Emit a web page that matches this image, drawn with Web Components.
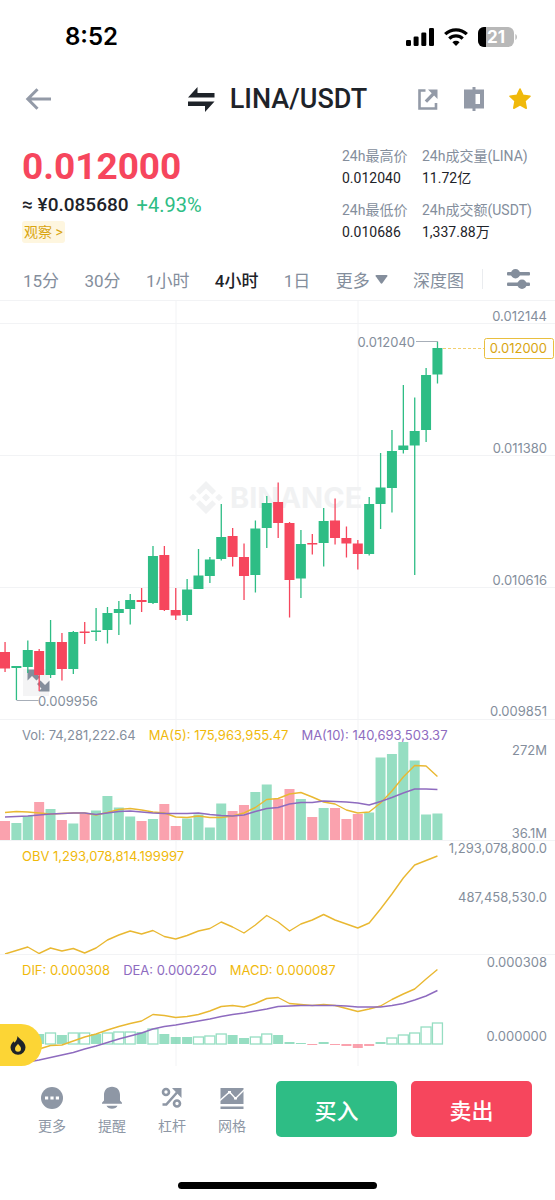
<!DOCTYPE html>
<html lang="zh-CN">
<head>
<meta charset="utf-8">
<meta name="viewport" content="width=device-width, initial-scale=1">
<title>LINA/USDT</title>
<style>
    body{
        margin: 0;
        background: #fff;
        color: #1e2329;
        font-family: Roboto, "Noto Sans CJK SC", sans-serif;
        --muted: #848e9c;
        --up: #2ebd85;
        --down: #f6465d;
        --gold: #f0b90b;
        --line: #f2f3f5;
    }
</style>
</head>
<body>
<trade-page></trade-page>

<script>
class StatusBar extends HTMLElement{

constructor(){
    super();
    this.attachShadow({ mode: 'open' });
}

connectedCallback(){
    this.shadowRoot.innerHTML = `
    <style>
    :host{
        display: flex;
        justify-content: space-between;
        align-items: center;
        padding: 22px 38px 0 65px;
        color: #000;
        font: 600 24px/30px Inter, sans-serif;
    }
    div{
        display: flex;
        align-items: center;
        gap: 10px;
    }
    svg{
        display: block;
    }
    </style>
    <span>${ this.getAttribute('time') }</span>
    <div>
        <svg width="28" height="18" viewBox="0 0 28 18">
            <rect x="0" y="12" width="5" height="6" rx="1.3"/>
            <rect x="7.6" y="8.5" width="5" height="9.5" rx="1.3"/>
            <rect x="15.3" y="4.5" width="5" height="13.5" rx="1.3"/>
            <rect x="23" y="0" width="5" height="18" rx="1.3"/>
        </svg>
        <svg width="24" height="18" viewBox="0 0 24 18" fill="none" stroke="#000" stroke-width="3.2">
            <path d="M1.2 6.2a15.5 15.5 0 0 1 21.6 0"/>
            <path d="M5.3 10.6a9.6 9.6 0 0 1 13.4 0"/>
            <path d="M12 18l-3.6-3.8a5.2 5.2 0 0 1 7.2 0z" fill="#000" stroke="none"/>
        </svg>
        <svg width="39" height="20" viewBox="0 0 39 20">
            <defs><clipPath id="cell"><rect width="36" height="20" rx="6"/></clipPath></defs>
            <g clip-path="url(#cell)">
                <rect width="36" height="20" fill="#b8b8b8"/>
                <rect width="8" height="20"/>
            </g>
            <path d="M37.4 7v6c2-1 2-5 0-6z" fill="#b8b8b8"/>
            <text x="18" y="16" text-anchor="middle" font-size="17" font-weight="700" fill="#fff">${ this.getAttribute('battery') }</text>
        </svg>
    </div>
    `;
}

}

customElements.define('status-bar', StatusBar);


class PairHeader extends HTMLElement{

constructor(){
    super();
    this.attachShadow({ mode: 'open' });
}

connectedCallback(){
    this.shadowRoot.innerHTML = `
    <style>
    :host{
        display: grid;
        grid-template-columns: 1fr auto 1fr;
        align-items: center;
        padding: 27px 22px 0;
    }
    h1{
        display: flex;
        align-items: center;
        gap: 15px;
        margin: 0;
        font-size: 27px;
        font-weight: 500;
        line-height: 40px;
    }
    button{
        display: flex;
        align-items: center;
        justify-content: center;
        width: 32px;
        height: 40px;
        padding: 0;
        border: 0;
        background: none;
        color: #939aa7;
        cursor: pointer;
    }
    nav{
        display: flex;
        justify-content: flex-end;
        gap: 14px;
        margin-right: -3px;
    }
    </style>
    <button aria-label="返回">
        <svg width="28" height="24" viewBox="0 0 28 24" fill="none" stroke="currentColor" stroke-width="3">
            <path d="M27 12H4M13.5 2.200L3.800 12l9.700 9.800"/>
        </svg>
    </button>
    <h1>
        <svg width="27" height="25" viewBox="0 0 27 25" fill="#1e2329">
            <path d="M0 10.500L9.500 0v6H26.500v4.500z"/>
            <path d="M26.500 14.500L17 25v-6H0v-4.500z"/>
        </svg>
        <slot></slot>
    </h1>
    <nav>
        <button aria-label="分享">
            <svg width="20" height="21" viewBox="0 0 20 21">
                <path d="M7.500 1.500H1.500v18h16.500v-5.500" fill="none" stroke="currentColor" stroke-width="2.600"/>
                <path d="M10 .5h9.500V10l-3.400-3.400-7 7.200-2.400-2.400 7-7.200z" fill="currentColor"/>
            </svg>
        </button>
        <button aria-label="图表">
            <svg width="20" height="24" viewBox="0 0 20 24" fill="currentColor">
                <path fill-rule="evenodd" d="M8.500 0h3v2.500H20v19h-8.500V24h-3v-2.500H0v-19h8.500zM11.500 7v10h4.500V7z"/>
            </svg>
        </button>
        <button aria-label="收藏">
            <svg width="22" height="22" viewBox="0 0 22 22" fill="#f0b90b" stroke="#f0b90b" stroke-width="1.600" stroke-linejoin="round">
                <path d="M11 1l3 6.300 7 .9-5.100 4.800 1.300 7.200L11 16.800l-6.200 3.400 1.300-7.200L1 8.200l7-.9z"/>
            </svg>
        </button>
    </nav>
    `;
}

}

customElements.define('pair-header', PairHeader);


class TickerSummary extends HTMLElement{

constructor(){
    super();
    this.attachShadow({ mode: 'open' });
}

connectedCallback(){
    this.shadowRoot.innerHTML = `
    <style>
    :host{
        display: flex;
        justify-content: space-between;
        padding: 26px 22px 0;
    }
    .price{
        color: var(--down);
        font-size: 37px;
        font-weight: 700;
        line-height: 44px;
    }
    .fiat{
        display: flex;
        gap: 8px;
        font-size: 19px;
        font-weight: 500;
        line-height: 32px;
    }
    .fiat span{
        color: var(--up);
        font-size: 20px;
        font-weight: 400;
    }
    a{
        display: inline-block;
        padding: 0 2px;
        border-radius: 3px;
        background: #fef6df;
        color: #d9a510;
        font-size: 14px;
        line-height: 22px;
        text-decoration: none;
    }
    dl{
        display: grid;
        grid-template-columns: 65px 111px;
        gap: 10px 15px;
        margin: 0;
        font-size: 14px;
        line-height: 22px;
        white-space: nowrap;
    }
    dt{
        color: var(--muted);
    }
    dd{
        margin: 0;
    }
    </style>
    <div>
        <div class="price">0.012000</div>
        <div class="fiat">≈ ¥0.085680 <span>+4.93%</span></div>
        <a href="#watch">观察 &gt;</a>
    </div>
    <dl>
        <div><dt>24h最高价</dt><dd>0.012040</dd></div>
        <div><dt>24h成交量(LINA)</dt><dd>11.72亿</dd></div>
        <div><dt>24h最低价</dt><dd>0.010686</dd></div>
        <div><dt>24h成交额(USDT)</dt><dd>1,337.88万</dd></div>
    </dl>
    `;
}

}

customElements.define('ticker-summary', TickerSummary);


class IntervalTabs extends HTMLElement{

constructor(){
    super();
    this.attachShadow({ mode: 'open' });
}

connectedCallback(){
    const active = this.getAttribute('active');
    const tabs = ['15分', '30分', '1小时', '4小时', '1日'];
    this.shadowRoot.innerHTML = `
    <style>
    :host{
        display: flex;
        align-items: center;
        gap: 18px;
        padding: 15px 25px 0 23px;
    }
    nav{
        display: flex;
        flex: 1;
        justify-content: space-between;
    }
    button{
        display: flex;
        align-items: center;
        gap: 5px;
        height: 42px;
        padding: 0;
        border: 0;
        background: none;
        color: var(--muted);
        font: inherit;
        font-size: 17px;
        white-space: nowrap;
        cursor: pointer;
    }
    .on{
        color: #1e2329;
        font-weight: 500;
    }
    .set{
        padding-left: 24px;
        height: 20px;
        border-left: 1px solid #eaecef;
    }
    </style>
    <nav>
        ${ tabs.map(t => `<button class="${ t === active ? 'on' : '' }">${ t }</button>`).join('') }
        <button>更多 <svg width="13" height="9" viewBox="0 0 13 9"><path d="M1.500 0h10q1.500 0 .8 1.200L7.500 8q-1 1.300-2 0L.7 1.200Q0 0 1.500 0z" fill="currentColor"/></svg></button>
        <button>深度图</button>
    </nav>
    <button class="set" aria-label="设置">
        <svg width="23" height="20" viewBox="0 0 23 20" fill="currentColor">
            <rect y="3" width="23" height="3.400" rx="1"/>
            <circle cx="8.500" cy="4.700" r="4.700"/>
            <rect y="13.600" width="23" height="3.400" rx="1"/>
            <circle cx="15" cy="15.300" r="4.700"/>
        </svg>
    </button>
    `;
}

}

customElements.define('interval-tabs', IntervalTabs);


// Series shared by the panes, in chart units. One column every 11.38 units.
const STEP = 11.38;
const x = i => 5 + i * STEP;

// high, low, body top, body bottom, 1 = rising
const CANDLES = [
    [642,672,652,668.5,0],[666,700,666,668,1],[640.5,673,650,667,1],[649,691,651,675,0],
    [620,678,642,675,1],[633,680.5,642,669,0],[631,674,632,669,1],[622,644,631.5,633,0],
    [608,641,630.5,632,1],[607,643.5,613,630,1],[601,635,609,613,1],[594,624.5,600,609,1],
    [588,612,600,602,0],[546,604,556,603,1],[546,611,555,610,0],[588,620,610,615.5,0],
    [579,621,589.5,615,1],[549,589,575.5,589,1],[557,583,559.5,576,1],[504,560.5,537,559,1],
    [528,566.5,536,557,0],[543.5,600,557,576,0],[520.5,592.5,528.5,575,1],[496,548,503,528,1],
    [482.5,538,502,523,0],[522,617.5,523,580,0],[530,598,544,578.5,1],[534,554.5,543,544.5,0],
    [508,566.5,521,543,1],[498.5,544.5,520.5,538,0],[526.5,557.5,538,543.5,0],[540,569.5,543.5,554,0],
    [497,555.5,504,554,1],[453,529,487.5,504,1],[430,512.5,451,488,1],[385,453.5,445.5,450,1],
    [397.5,575,431,445.5,1],[368,442,375,430,1],[341.5,383.5,348,374.5,1]
];
const VOLUME = [821,823,816,802,809,820,823.5,814,810.5,796,807.5,816.5,821,819,804,826,818.5,814.5,827.5,803.5,811,805,792,784.5,799,789,799,817,808,808,819,814,812.5,757.5,754,742,760.5,814.5,813.5];
const MA5 = [812.5,811.5,812,813,814,813.5,813,813,815,812.5,809.5,808.5,810,812,813,817,817.5,816,817.5,817.5,816,813,807.5,799.5,798.5,794,792.5,797,802,804,810,813,812,803,791,777,765.5,766,776.5];
const MA10 = [817,816.5,816,815,814,813.5,813,813,814.5,813,811.5,811,812,813,813.5,813.5,813.5,813,814.5,815.5,816,815,811.5,808.5,807.5,804,802.5,802.5,801,801.5,802,803,805,801.5,797.5,793,789,789,789.5];
const OBV = [954,950.5,947,953.5,948,951,948.5,953,948,940,935,931,934,930.5,936.5,939,935.5,931,928.5,922,927,933,925,915.5,922,931,924,920,914.5,920,924,928,923,909,894,878,865,860.5,856];
const DIF = [1060,1056,1052,1049,1045.5,1045,1041,1037,1034,1030,1026.5,1023.5,1021,1014.5,1015.5,1017.5,1016.5,1014.5,1011,1006.5,1005.5,1007,1003.5,998.5,997.5,1003.5,1004.5,1005.5,1004.5,1005.5,1008.5,1011.5,1009,1006,999.5,994,989,979,969.5];
const DEA = [1065,1064,1062,1060,1057.5,1055,1052.5,1049,1046,1042.5,1039,1036,1033,1029,1026.5,1025,1023,1021,1019,1016.5,1014.5,1013,1011,1009,1006.5,1006,1005.5,1005.5,1005.5,1005.5,1006,1007,1007,1007,1005.5,1003.5,1000,996,990.5];
// bar length from the zero line, and h = hollow, f = filled, r = below zero
const MACD = [[9,'f'],[9,'f'],[10,'f'],[10,'f'],[11,'h'],[9,'f'],[11,'h'],[11,'h'],[10,'f'],[11,'h'],[12,'h'],[12,'h'],[12,'f'],[15,'h'],[10,'f'],[7,'f'],[7,'f'],[7,'h'],[8,'h'],[10,'h'],[9,'f'],[6,'f'],[7,'h'],[10,'h'],[9,'f'],[2,'f'],[1,'f'],[1,'r'],[2,'f'],[1,'r'],[2,'r'],[4,'r'],[2,'r'],[2,'f'],[6,'h'],[9,'h'],[11,'h'],[17,'h'],[21,'h']];

class ChartPane extends HTMLElement{

constructor(){
    super();
    this.attachShadow({ mode: 'open' });
}

connectedCallback(){
    const top = Number(this.getAttribute('top'));
    const span = Number(this.getAttribute('span'));
    this.shadowRoot.innerHTML = `
    <style>
    :host{
        display: grid;
    }
    svg, .legend{
        grid-area: 1 / 1;
    }
    svg{
        display: block;
        width: 100%;
        overflow: hidden;
        font: 13px Inter, sans-serif;
    }
    .legend{
        display: flex;
        align-items: flex-start;
        gap: 13px;
        padding: 7px 22px 0;
        color: var(--gold);
        font: 13px/18px Inter, sans-serif;
        white-space: nowrap;
        z-index: 1;
    }
    .grid{
        stroke: var(--line);
        fill: none;
    }
    .axis{
        fill: var(--muted);
        text-anchor: end;
    }
    .up{ fill: var(--up); }
    .down{ fill: var(--down); }
    .bars{ fill-opacity: .5; }
    .hollow{
        fill: #fff;
        fill-opacity: 1;
        stroke: #96dec2;
        stroke-width: 1.3;
    }
    polyline{
        fill: none;
        stroke-width: 1.4;
        stroke-linejoin: round;
    }
    .gold{ stroke: #e9b832; }
    .violet{ stroke: #8e6bbf; }
    </style>
    <svg viewBox="0 ${ top } 555 ${ span }" aria-hidden="true">
        <path class="grid" d="M176 ${ top }v${ span }M358 ${ top }v${ span }"/>
        ${ this[this.getAttribute('kind')]() }
    </svg>
    <div class="legend"><slot></slot></div>
    `;
}

line(values, color){
    return `<polyline class="${ color }" points="${ values.map((v, i) => x(i) + ',' + v).join(' ') }"/>`;
}

rule(y){
    return `<path class="grid" d="M0 ${ y }.5h555"/>`;
}

axis(y, text){
    return `<text class="axis" x="547" y="${ y }">${ text }</text>`;
}

price(){
    return `
        ${ [300, 323, 455, 587].map(this.rule).join('') }
        <g fill="#f1f2f3">
            <g transform="translate(206 497.500)">
                <path d="M0-16.500l10 10-3.700 3.700L0-9.100l-6.300 6.300L-10-6.500zM0 16.500l10-10-3.700-3.700L0 9.100l-6.300-6.300L-10 6.500zM-13-3.700L-9.300 0-13 3.700-16.700 0zM13-3.700L16.700 0 13 3.700 9.300 0zM0-4L4 0 0 4-4 0z"/>
            </g>
            <text x="230" y="508" font-size="29" font-weight="700">BINANCE</text>
        </g>
        <rect x="23" y="669" width="26" height="27" fill="#f4f4f5"/>
        <path d="M27.500 669.500h11l-3 3 4.500 4.500-3.500 3.500-4.500-4.500-4.500 4.500zM49.500 691.500h-11l3-3-4.500-4.500 3.500-3.500 4.500 4.500 4.500-4.500z" fill="#848e9c"/>
        ${ CANDLES.map(([h, l, t, b, up], i) => `<g class="${ up ? 'up' : 'down' }">
            <rect x="${ x(i) - .6 }" y="${ h }" width="1.3" height="${ l - h }"/>
            <rect x="${ x(i) - 5 }" y="${ t }" width="10" height="${ Math.max(b - t, 1.3) }"/>
        </g>`).join('') }
        <path d="M16.500 700.500h22M416 341.500h22" stroke="#a7aeb8"/>
        <text x="38" y="706" fill="#848e9c">0.009956</text>
        <text class="axis" x="415" y="347">0.012040</text>
        <path d="M443 348.500h41" stroke="#f2cf6f" stroke-dasharray="3 2"/>
        <rect x="484.500" y="338.500" width="69" height="20" rx="2" fill="#fff" stroke="#e9bf3f"/>
        <text x="547" y="353" text-anchor="end" fill="#d9a510">0.012000</text>
        ${ this.axis(321, '0.012144') }
        ${ this.axis(453, '0.011380') }
        ${ this.axis(585, '0.010616') }
        ${ this.axis(716, '0.009851') }
    `;
}

volume(){
    return `
        ${ this.rule(719) }
        <g class="bars">
        ${ VOLUME.map((v, i) => `<rect class="${ CANDLES[i][4] ? 'up' : 'down' }" x="${ x(i) - 5 }" y="${ v }" width="10" height="${ 840 - v }"/>`).join('') }
        </g>
        ${ this.line(MA5, 'gold') }
        ${ this.line(MA10, 'violet') }
        ${ this.axis(755, '272M') }
        ${ this.axis(838, '36.1M') }
    `;
}

obv(){
    return `
        ${ this.rule(840) }
        ${ this.line(OBV, 'gold') }
        ${ this.axis(853, '1,293,078,800.0') }
        ${ this.axis(902, '487,458,530.0') }
    `;
}

macd(){
    return `
        ${ this.rule(954) }
        <g class="bars">
        ${ MACD.map(([n, kind], i) => kind === 'h'
            ? `<rect class="hollow" x="${ x(i) - 5 }" y="${ 1044 - n }" width="10" height="${ n }"/>`
            : `<rect class="${ kind === 'r' ? 'down' : 'up' }" x="${ x(i) - 5 }" y="${ kind === 'r' ? 1044 : 1044 - n }" width="10" height="${ n }"/>`).join('') }
        </g>
        ${ this.line(DIF, 'gold') }
        ${ this.line(DEA, 'violet') }
        ${ this.axis(967, '0.000308') }
        ${ this.axis(1041, '0.000000') }
    `;
}

}

customElements.define('chart-pane', ChartPane);


class HotBadge extends HTMLElement{

constructor(){
    super();
    this.attachShadow({ mode: 'open' });
}

connectedCallback(){
    this.shadowRoot.innerHTML = `
    <style>
    :host{
        position: absolute;
        left: 0;
        bottom: 0;
        z-index: 1;
    }
    button{
        display: flex;
        align-items: center;
        width: 42px;
        height: 42px;
        padding: 0 0 0 10px;
        border: 0;
        border-radius: 0 21px 21px 0;
        background: #fcd535;
        cursor: pointer;
    }
    </style>
    <button aria-label="热门">
        <svg width="16" height="19" viewBox="0 0 16 19">
            <path fill="#1e2329" fill-rule="evenodd" d="M7.500 0c1 2.500 8 5.500 8 11.200a7.500 7.500 0 0 1-15 .3C.5 8.800 2 6.800 3.800 5.200l.6 1.600C6 5.200 7.500 3 7.500 0zM8 7.800c-1 1.600-3 2.700-3 5a3 3 0 0 0 6 0c0-2.300-2-3.400-3-5z"/>
        </svg>
    </button>
    `;
}

}

customElements.define('hot-badge', HotBadge);


class ActionBar extends HTMLElement{

icons = {
    more: '<circle cx="12" cy="12" r="11" fill="currentColor"/><path d="M5 10.500h3.200v3H5zM10.400 10.500h3.200v3h-3.200zM15.800 10.500H19v3h-3.200z" fill="#fff"/>',
    bell: '<path d="M12 .8c5 0 8 3.600 8 8v5.700l2 2.200v1H2v-1l2-2.200V8.800c0-4.400 3-8 8-8zM6.500 19.700h11c-1.500 4-9.500 4-11 0z" fill="currentColor"/>',
    lever: '<g fill="none" stroke="currentColor" stroke-width="2.600"><circle cx="6" cy="6" r="3"/><circle cx="17" cy="17.500" r="3"/><path d="M2.500 18.500h3.800L17 6.500"/></g><path d="M12 2h9.500v10z" fill="currentColor"/>',
    grid: '<path d="M.5 2h23v16H.5zM.5 20.500h23V23H.5z" fill="currentColor"/><path d="M0 14.500L9.500 6l6 6.500L24 4" fill="none" stroke="#fff" stroke-width="1.400"/><path d="M8 5h3v2.500H8zM14 11h3v2.500h-3z" fill="#fff"/>'
}

constructor(){
    super();
    this.attachShadow({ mode: 'open' });
}

item(icon, text){
    return `<button><svg width="24" height="24" viewBox="0 0 24 24">${ this.icons[icon] }</svg>${ text }</button>`;
}

connectedCallback(){
    this.shadowRoot.innerHTML = `
    <style>
    :host{
        display: flex;
        gap: 14px;
        padding: 15px 23px 0 22px;
    }
    nav{
        display: flex;
        flex: 1 1 240px;
    }
    nav button{
        display: flex;
        flex: 1;
        flex-direction: column;
        align-items: center;
        gap: 6px;
        padding: 5px 0 0;
        border: 0;
        background: none;
        color: #8e97a5;
        font: inherit;
        font-size: 14px;
        line-height: 20px;
        cursor: pointer;
    }
    .trade{
        flex: 0 1 121px;
        height: 56px;
        padding: 0;
        border: 0;
        border-radius: 5px;
        background: var(--up);
        color: #fff;
        font: inherit;
        font-size: 22px;
        font-weight: 500;
        cursor: pointer;
    }
    .sell{
        background: var(--down);
    }
    </style>
    <nav>
        ${ this.item('more', '更多') }
        ${ this.item('bell', '提醒') }
        ${ this.item('lever', '杠杆') }
        ${ this.item('grid', '网格') }
    </nav>
    <button class="trade">买入</button>
    <button class="trade sell">卖出</button>
    `;
}

}

customElements.define('action-bar', ActionBar);


class TradePage extends HTMLElement{

constructor(){
    super();
    this.attachShadow({ mode: 'open' });
}

connectedCallback(){
    this.shadowRoot.innerHTML = `
    <style>
    :host{
        display: block;
    }
    section{
        position: relative;
    }
    .vol{ color: var(--muted); }
    .violet{ color: #8e6bbf; }
    .home{
        width: 36%;
        height: 7px;
        margin: 45px auto 10px;
        border-radius: 4px;
        background: #000;
    }
    </style>
    <status-bar time="8:52" battery="21"></status-bar>
    <pair-header>LINA/USDT</pair-header>
    <ticker-summary></ticker-summary>
    <interval-tabs active="4小时"></interval-tabs>
    <section>
        <chart-pane kind="price" top="300" span="419"></chart-pane>
        <chart-pane kind="volume" top="719" span="121">
            <span class="vol">Vol: 74,281,222.64</span>
            <span>MA(5): 175,963,955.47</span>
            <span class="violet">MA(10): 140,693,503.37</span>
        </chart-pane>
        <chart-pane kind="obv" top="840" span="114">
            <span>OBV 1,293,078,814.199997</span>
        </chart-pane>
        <chart-pane kind="macd" top="954" span="112">
            <span>DIF: 0.000308</span>
            <span class="violet">DEA: 0.000220</span>
            <span>MACD: 0.000087</span>
        </chart-pane>
        <hot-badge></hot-badge>
    </section>
    <action-bar></action-bar>
    <div class="home"></div>
    `;
}

}

customElements.define('trade-page', TradePage);
</script>
</body>
</html>
